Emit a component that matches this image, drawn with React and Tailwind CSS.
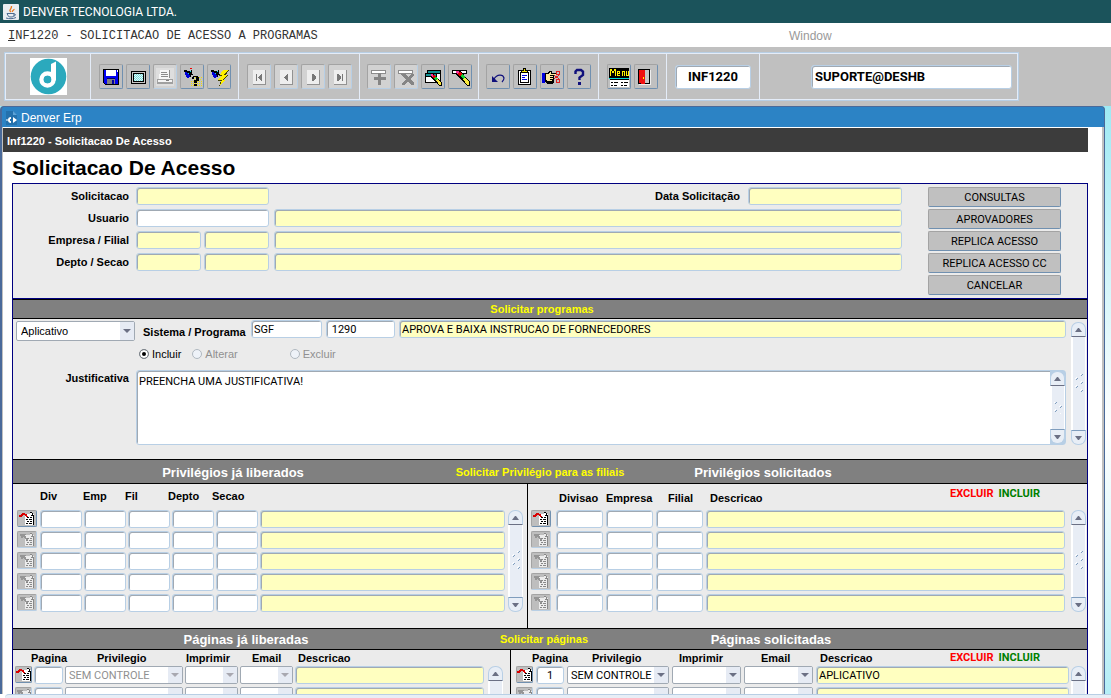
import React, { useState } from "react";
import clsx from "clsx";

const FIELD =
  "min-w-0 rounded-[3px] border border-[#b8cfe5] px-[2px] font-[Roboto,sans-serif] text-[11px] leading-4 text-black outline-none shadow-[inset_1px_1px_0_#a0a9b3]";

/* ---------- toolbar icons, one unit is one pixel ---------- */

const Svg = ({ children, w = 20, h = 20 }) => (
  <svg width={w} height={h} viewBox={`0 0 ${w} ${h}`} shapeRendering="crispEdges" fill="none" aria-hidden="true">
    {children}
  </svg>
);

const SaveIcon = () => (
  <Svg>
    <path d="M2 2h16v16H4l-2-2z" fill="#000" />
    <path d="M3 3h14v14H4l-1-1z" fill="#0000f0" />
    <path d="M5 3h10v6H5z" fill="#fff" />
    <path d="M16 3h1v2h-1z" fill="#fff" />
    <path d="M6 12h8v5H6z" fill="#808080" />
    <path d="M11 13h2v4h-2z" fill="#0000a0" />
    <path d="M6 11h8v1H6z" fill="#000060" />
  </Svg>
);

const ScreenIcon = () => (
  <Svg>
    <rect x="3" y="4" width="15" height="13" rx="1" fill="#000" />
    <path d="M4 5h13v11H4z" fill="#c8c8c8" />
    <path d="M5 6h11v9H5z" fill="#000" />
    <path d="M6 7h9v7H6z" fill="#e4fafa" />
    <path d="M6 7.500h9M6 9.500h9M6 11.500h9M6 13.500h9" stroke="#70d8d8" strokeDasharray="1 1" />
    <path d="M7 8.500h8M7 10.500h8M7 12.500h8" stroke="#80e0e0" strokeDasharray="1 1" />
  </Svg>
);

const PrintIcon = () => (
  <Svg>
    <path d="M1 1h18v18H1z" fill="#dedede" />
    <path d="M5 3h9l1 9H4z" fill="#f8f8f8" />
    <path d="M6 5.500h6M6 7.500h7M6 9.500h7M14.500 3v8M4 12.500h13" stroke="#8c8c8c" />
    <path d="M2 12h16v5H2z" fill="#a0a0a0" />
    <path d="M3 13h14v2H3z" fill="#f4f4f4" />
    <path d="M11 13.500h3" stroke="#808080" />
  </Svg>
);

const Torch = () => (
  <>
    <path d="M2 4h4l3 3-2 4H5z" fill="#0000d8" />
    <path d="M5 4h3l2 2-2 3-3-3z" fill="#00d8e8" />
    <path d="M2 3h3v1h3v1h2v2h1v1H9v2H8V8H7V6H5V5H2zM9 3h1v2H9z" fill="#000" />
  </>
);

const QueryIcon = () => (
  <Svg>
    <path d="M11 10.500h9M12 12.500h8M9 14.500h11M9 16.500h11M9 18.500h11" stroke="#f0e000" strokeDasharray="1 1" />
    <Torch />
    <path d="M8 1h2v1H8z" fill="#f00000" />
    <path d="M11 9h5v1h1v4h-2v2h-3v-3h2v-3h-2v2h-2v-2h1zM12 17h3v2h-3z" fill="#000" />
  </Svg>
);

const RunQueryIcon = () => (
  <Svg>
    <Torch />
    <path d="M14 3h6l-3 5h2l-4 5h2l-7 6 2-5H9l3-5h-2z" fill="#404000" />
    <path d="M14 3h5l-4 5h3l-4 5h2l-5 5 2-5H9l4-5h-2z" fill="#fff000" />
  </Svg>
);

const NavIcon = ({ children }) => (
  <Svg>
    <path d="M4 3h13v14H4z" fill="#eee" />
    <path d="M16 3h1v15H4v-1h12z" fill="#929292" />
    <g fill="#777">{children}</g>
  </Svg>
);

const FirstIcon = () => <NavIcon><path d="M7 7h1v7H7zM12 7h1v7h-1l-3-3v-1z" /></NavIcon>;
const PrevIcon = () => <NavIcon><path d="M11 7h1v7h-1l-3-3v-1z" /></NavIcon>;
const NextIcon = () => <NavIcon><path d="M9 7h1l3 3v1l-3 3H9z" /></NavIcon>;
const LastIcon = () => <NavIcon><path d="M7 7h1l3 3v1l-3 3H7zM12 7h1v7h-1z" /></NavIcon>;

const InsertIcon = () => (
  <Svg>
    <path d="M2 3h15v4H2z" fill="#8c8c8c" />
    <path d="M3 4h13v2H3z" fill="#fff" />
    <path d="M9 6h3v4h5v3h-5v5H9v-5H5v-3h4z" fill="#858585" />
  </Svg>
);

const RemoveIcon = () => (
  <Svg>
    <path d="M2 3h15v4H2z" fill="#8c8c8c" />
    <path d="M3 4h13v2H3z" fill="#fff" />
    <path d="M5 7h4l3 3 3-3h3v1l-4 4 4 4v2h-3l-3-4-3 4H6v-2l4-4-5-4z" fill="#858585" />
  </Svg>
);

const Pencil = () => (
  <>
    <path d="M6 3h3l4 4 1 1 6 7v4h-3L6 8z" fill="#000" />
    <path d="M6 4h3l2 3-2 2-3-3z" fill="#ff30a0" />
    <path d="M9 5h1l2 2-2 2-2-1z" fill="#e00000" />
    <path d="M12 7l3 3-2 2-3-3z" fill="#10d030" />
    <path d="M15 10l4 5v3h-2l-4-6z" fill="#f8e840" />
  </>
);

const ClearBlockIcon = () => (
  <Svg>
    <path d="M4 3h14v13H4zM2 6h3v10H2z" fill="#000" />
    <path d="M5 4h12v2H5zM3 7h10v2H3z" fill="#109090" />
    <path d="M3 10h10v5H3zM14 7h3v8h-3z" fill="#fff" />
    <g transform="translate(3 4) scale(.8)"><Pencil /></g>
  </Svg>
);

const ClearRecordIcon = () => (
  <Svg>
    <path d="M2 3h15v4H2z" fill="#000" />
    <path d="M3 4h13v2H3z" fill="#fff" />
    <Pencil />
  </Svg>
);

const UndoIcon = () => (
  <svg width="20" height="20" viewBox="0 0 20 20" fill="none" aria-hidden="true">
    <path d="M4 9v6h6z" fill="#10107c" />
    <path d="M6 12c3-5 9-5 10-1 0 2-1 3-2 4" stroke="#10107c" strokeWidth="1.200" />
  </svg>
);

const ClipboardIcon = () => (
  <Svg>
    <path d="M3 3h13v15H3z" fill="#000" />
    <path d="M4 4h11v13H4z" fill="#fff" />
    <path d="M5 5h9v11H5z" fill="#000" />
    <path d="M6 6h7v9H6z" fill="#fff" />
    <path d="M8 1h3v2h2v3H6V3h2z" fill="#000" />
    <path d="M9 2h1v2h2v1H7V4h2z" fill="#f0e000" />
    <path d="M7 8.500h5M7 10.500h3M7 12.500h5" stroke="#0000e0" />
  </Svg>
);

const HandIcon = () => (
  <Svg>
    <path d="M0 6h3v10H0z" fill="#0000e0" />
    <path d="M3 6h2l3-2h2v2h5v2h-3v7l-2 2H5l-2-2z" fill="#000" />
    <path d="M4 7h2l2-2h1v2h5v1H8v1h3v1H8v1h3v1H8v1h2v1H5l-1-1z" fill="#ffe8a0" />
    <path d="M14.500 4.500h3v3h-3zM14.500 12.500h3v3h-3zM12 12l5-4M12 8l5 4" stroke="#e02020" />
  </Svg>
);

const HelpIcon = () => (
  <svg width="20" height="20" viewBox="0 0 20 20" fill="none" aria-hidden="true">
    <path d="M6.500 7V4.500L8 3h4l2 1.500V8l-3.500 2.500V13" stroke="#10107c" strokeWidth="2.400" />
    <path d="M9 15h3v3H9z" fill="#10107c" />
  </svg>
);

const MenuIcon = () => (
  <Svg>
    <path d="M0 1h20v10H0z" fill="#000" />
    <path d="M1.500 9V2.500h1L4 6l1.500-3.500h1V9M11 8.500H8.500v-4h2v2h-2M13.500 9V4.500h2V9M17.500 4v4.500h2V4" stroke="#fff000" />
    <path d="M1 11h19v9H1z" fill="#fff" />
    <path d="M0 11h20v1H0z" fill="#00d8d8" />
    <path d="M1 12.500h19M2 15.500h2m1 0h4m3 0h2m1 0h4M2 18.500h2m1 0h3m4 0h2m1 0h3" stroke="#000" />
  </Svg>
);

const ExitIcon = () => (
  <Svg>
    <path d="M2 2h12v15H2z" fill="#000" />
    <path d="M9 3h4v13H9z" fill="#c8c8c8" />
    <path d="M3 3h5l1 1v13H7l-4-1z" fill="#f01010" />
    <path d="M7 10h1v2H7z" fill="#ff0" />
    <path d="M14 3h1v15H3v-1h11z" fill="#eee" />
  </Svg>
);

const toolbarGroups = [
  {
    width: "w-[148px]",
    tools: [
      { label: "Salvar", icon: SaveIcon },
      { label: "Tela", icon: ScreenIcon },
      { label: "Imprimir", icon: PrintIcon, disabled: true },
      { label: "Consultar", icon: QueryIcon },
      { label: "Executar consulta", icon: RunQueryIcon },
    ],
  },
  {
    width: "w-[121px]",
    tools: [
      { label: "Primeiro", icon: FirstIcon, disabled: true },
      { label: "Anterior", icon: PrevIcon, disabled: true },
      { label: "Proximo", icon: NextIcon, disabled: true },
      { label: "Ultimo", icon: LastIcon, disabled: true },
    ],
  },
  {
    width: "w-[119px]",
    tools: [
      { label: "Inserir", icon: InsertIcon, disabled: true },
      { label: "Remover", icon: RemoveIcon, disabled: true },
      { label: "Limpar bloco", icon: ClearBlockIcon },
      { label: "Limpar registro", icon: ClearRecordIcon },
    ],
  },
  {
    width: "w-[120px]",
    tools: [
      { label: "Desfazer", icon: UndoIcon },
      { label: "Lista de valores", icon: ClipboardIcon },
      { label: "Chamar", icon: HandIcon },
      { label: "Ajuda", icon: HelpIcon },
    ],
  },
  {
    width: "w-[68px]",
    tools: [
      { label: "Menu", icon: MenuIcon },
      { label: "Sair", icon: ExitIcon },
    ],
  },
];

const JavaIcon = () => (
  <svg width="16" height="16" viewBox="0 0 16 16" aria-hidden="true">
    <rect width="16" height="16" rx="1" fill="#e8ecf0" />
    <path d="M8 8C5 6 9 5 8.500 2M9.500 8c-1-1.500 2-2 1.500-3" stroke="#e87a20" strokeWidth="1.300" fill="none" />
    <path d="M4 9.500h7v2c0 2-6 2-6 0zM11 10c2-.5 2 2-.5 2M3 14c3 1 7 1 10-.5" stroke="#4a6a90" strokeWidth="1" fill="none" />
  </svg>
);

const DenverLogo = () => (
  <svg width="37" height="37" viewBox="0 0 37 37" className="shrink-0" role="img" aria-label="Denver">
    <rect width="37" height="37" fill="#fff" />
    <circle cx="18.500" cy="18.500" r="17.800" fill="#2ba9bd" />
    <circle cx="17.500" cy="21.500" r="6" fill="none" stroke="#fff" strokeWidth="4.500" />
    <path d="M21 6l5-2.500V22l-3 3-2-3z" fill="#fff" />
    <circle cx="17.500" cy="21.500" r="3.800" fill="#2ba9bd" />
  </svg>
);

const FormIcon = () => (
  <svg width="13" height="16" viewBox="0 0 13 16" aria-hidden="true">
    <path d="M1 1h7l4 4v10H1z" fill="#2471ad" />
    <path d="M8 1v4h4z" fill="#5da3d8" />
    <path d="M6 7a3 3 0 1 0 0 6v-2H5V9h1zM8 7l4 3-4 3z" fill="#fff" />
    <path d="M1 10h2" stroke="#fff" />
  </svg>
);

// small "detail" button in front of each record
const DetailIcon = ({ active }) => {
  const ink = active ? "#000" : "#888";
  return (
    <svg width="18" height="15" viewBox="0 0 18 15" shapeRendering="crispEdges" fill="none" className="shrink-0" aria-hidden="true">
      <path d="M7 3h5V1h2l2 3v10H7z" fill={active ? "#fff" : "#ececec"} />
      <path d="M12 1.500h2M14.500 2v2M15.500 4v10M13 4.500h2M9 6.500h2m1 0h2M8 8.500h2m1 0h3M9 10.500h2m1 0h2M8 12.500h2m1 0h3" stroke={ink} />
      {active ? (
        <path d="M1 4h2V3h1V2h3v1h2v2h1v1H8V5H7V4H5v1H4v1H1z" fill="#d80000" />
      ) : (
        <path d="M2 2h6v1H7v1h1v2h1v1h1v1H8V7H7V6H6V5H5v1H3V4H2z" fill="#959595" />
      )}
    </svg>
  );
};

/* ---------- building blocks ---------- */

const ToolButton = ({ tool }) => {
  const Icon = tool.icon;
  return (
    <button
      type="button"
      aria-label={tool.label}
      disabled={tool.disabled}
      className={clsx(
        "flex h-[25px] w-6 shrink-0 items-center justify-center rounded-[2px] border border-t-[#a3a3a3] border-l-[#a3a3a3]",
        tool.disabled ? "border-r-[#b8cfe5] border-b-[#b8cfe5] bg-[#d2d2d2]" : "border-r-[#7090b0] border-b-[#7090b0] bg-[#c0c0c0]"
      )}
    >
      <Icon />
    </button>
  );
};

const Field = ({ label, id, className, yellow, value = "" }) => (
  <input
    id={id}
    aria-label={label}
    defaultValue={value}
    readOnly={yellow}
    className={clsx(FIELD, "h-[18px]", yellow ? "bg-[#ffffc0]" : "bg-white", className)}
  />
);

const Combo = ({ label, options, className, disabled, tall }) => (
  <div className={clsx("relative shrink-0", tall ? "h-5" : "h-[18px]", className)}>
    <select
      aria-label={label}
      disabled={disabled}
      className={clsx(
        "block h-full w-full appearance-none rounded-[2px] border border-[#a0a9b3] bg-white text-[11px] leading-4 opacity-100 outline-none",
        tall ? "pl-1" : "pt-px pl-[3px] font-[Roboto,sans-serif]",
        disabled ? "text-[#909090]" : "text-black"
      )}
    >
      {options.map((o) => (
        <option key={o}>{o}</option>
      ))}
    </select>
    <span className="pointer-events-none absolute inset-y-px right-px flex w-[14px] items-center justify-center bg-[#e6ebf4]">
      <svg width="8" height="4" viewBox="0 0 8 4" aria-hidden="true">
        <path d="M0 0h8L4 4z" fill={disabled ? "#a8a8b0" : "#6b7084"} />
      </svg>
    </span>
  </div>
);

const ScrollBar = ({ className, short }) => (
  <div className={clsx("flex w-[15px] shrink-0 flex-col", className)}>
    <button
      type="button"
      aria-label="Rolar para cima"
      className="flex h-[15px] shrink-0 items-center justify-center rounded-t-[7px] border border-b-[#6b7084] border-[#b8cfe5] bg-[#e8eef6]"
    >
      <svg width="7" height="4" viewBox="0 0 7 4"><path d="M3 0h1l3 4H0z" fill="#6b7084" /></svg>
    </button>
    <div className="flex min-h-0 flex-1 items-center justify-center overflow-hidden border-r border-l-2 border-white bg-[#e8edf5]">
      <svg width="8" height={short ? 12 : 20} viewBox={short ? "0 4 8 12" : "0 0 8 20"} aria-hidden="true">
        <path d="M6 2l2-2M1 6l2-2M6 10l2-2M1 14l2-2M6 18l2-2" stroke="#7f9dbd" />
        <path d="M5 1l2-2M0 5l2-2M5 9l2-2M0 13l2-2M5 17l2-2" stroke="#fff" />
      </svg>
    </div>
    <button
      type="button"
      aria-label="Rolar para baixo"
      className="flex h-[15px] shrink-0 items-center justify-center rounded-b-[7px] border border-t-[#7f9dbd] border-[#b8cfe5] bg-[#e8eef6]"
    >
      <svg width="7" height="4" viewBox="0 0 7 4"><path d="M0 0h7L4 4H3z" fill="#6b7084" /></svg>
    </button>
  </div>
);

const DetailButton = ({ active, className }) => (
  <button
    type="button"
    aria-label="Detalhe"
    disabled={!active}
    className={clsx(
      "flex h-[17px] shrink-0 items-center justify-center overflow-hidden rounded-[2px] border border-t-[#a3a3a3] border-l-[#a3a3a3] bg-[#bebebe]",
      active ? "border-r-[#7090b0] border-b-[#7090b0]" : "border-r-[#b8cfe5] border-b-[#b8cfe5]",
      className
    )}
  >
    <DetailIcon active={active} />
  </button>
);

const Legend = () => (
  <span className="flex gap-[5px] pr-[47px] font-[Roboto,sans-serif]">
    <span className="text-[#ff0000]">EXCLUIR</span>
    <span className="text-[#008000]">INCLUIR</span>
  </span>
);

const SectionBar = ({ className, children }) => (
  <div className={clsx("grid items-center border-y border-black bg-[#808080] text-center font-bold whitespace-nowrap", className)}>
    {children}
  </div>
);

const actions = ["CONSULTAS", "APROVADORES", "REPLICA ACESSO", "REPLICA ACESSO CC", "CANCELAR"];
const rows = [0, 1, 2, 3, 4];

/* ---------- screen parts ---------- */

const Toolbar = () => (
  <div className="flex h-[59px] shrink-0 items-start bg-[#c0c0c0] pt-[6px] pl-[5px]">
    <div className="flex h-[47px] border border-[#e4ecf8] shadow-[0_0_0_1px_#b8cfe5]">
      <div className="flex w-[85px] shrink-0 items-center justify-center border-r border-[#e4ecf8]">
        <DenverLogo />
      </div>
      {toolbarGroups.map((group, i) => (
        <div
          key={i}
          className={clsx("flex shrink-0 items-center justify-center gap-[3px] border-r border-[#e4ecf8]", group.width)}
        >
          {group.tools.map((tool) => (
            <ToolButton key={tool.label} tool={tool} />
          ))}
        </div>
      ))}
      <div className="flex w-[93px] shrink-0 items-center justify-center border-r border-[#e4ecf8]">
        <input
          aria-label="Programa"
          defaultValue="INF1220"
          className="h-6 w-[76px] rounded-[3px] border border-[#b8cfe5] bg-white text-center font-[Roboto,sans-serif] text-[13px] font-bold shadow-[inset_1px_1px_0_#a0a9b3]"
        />
      </div>
      <div className="flex w-[257px] shrink-0 items-center justify-end pr-[5px]">
        <input
          aria-label="Usuario conectado"
          defaultValue="SUPORTE@DESHB"
          className="h-6 w-[201px] rounded-[3px] border border-[#b8cfe5] bg-white px-[3px] font-[Roboto,sans-serif] text-[13px] font-bold shadow-[inset_1px_1px_0_#a0a9b3]"
        />
      </div>
    </div>
  </div>
);

const HeaderForm = () => (
  <div className="flex gap-[26px] border-b border-[#000080] pt-[3px] pr-[26px] pb-[3px]">
    <div className="flex min-w-0 flex-1 flex-col gap-1">
      <div className="flex h-[18px] items-center">
        <label htmlFor="solicitacao" className="mr-[7px] w-[116px] text-right font-bold">Solicitacao</label>
        <Field id="solicitacao" yellow className="w-[133px]" />
        <label htmlFor="data" className="mr-2 ml-auto font-bold">Data Solicitação</label>
        <Field id="data" yellow className="w-[154px]" />
      </div>
      <div className="flex h-[18px] items-center">
        <label htmlFor="usuario" className="mr-[7px] w-[116px] text-right font-bold">Usuario</label>
        <Field id="usuario" className="mr-[5px] w-[133px]" />
        <Field label="Nome do usuario" yellow className="flex-1" />
      </div>
      <div className="flex h-[18px] items-center">
        <label htmlFor="empresa" className="mr-[7px] w-[116px] text-right font-bold">Empresa / Filial</label>
        <Field id="empresa" yellow className="mr-[3px] w-[65px]" />
        <Field label="Filial" yellow className="mr-[5px] w-[65px]" />
        <Field label="Nome da empresa" yellow className="flex-1" />
      </div>
      <div className="flex h-[18px] items-center">
        <label htmlFor="depto" className="mr-[7px] w-[116px] text-right font-bold">Depto / Secao</label>
        <Field id="depto" yellow className="mr-[3px] w-[65px]" />
        <Field label="Secao" yellow className="mr-[5px] w-[65px]" />
        <Field label="Nome do departamento" yellow className="flex-1" />
      </div>
    </div>
    <div className="flex w-[133px] shrink-0 flex-col gap-[2px]">
      {actions.map((text) => (
        <button
          key={text}
          type="button"
          className="h-5 rounded-[2px] border border-t-[#a3a3a3] border-r-[#7090b0] border-b-[#7090b0] border-l-[#a3a3a3] bg-[#c0c0c0] pt-px font-[Roboto,sans-serif] text-[11px] leading-4"
        >
          {text}
        </button>
      ))}
    </div>
  </div>
);

const RadioOption = ({ value, current, onPick, className }) => {
  const disabled = value !== "Incluir";
  return (
    <label className={clsx("flex items-center gap-[3px]", disabled ? "text-[#909090]" : "text-black", className)}>
      <input
        type="radio"
        name="acao"
        value={value}
        checked={current === value}
        disabled={disabled}
        onChange={() => onPick(value)}
        className="size-[10px] appearance-none rounded-full border border-[#b0b8c0] bg-[#eef2f8] checked:border-[#808890] checked:bg-black checked:shadow-[inset_0_0_0_2px_#fff]"
      />
      {value}
    </label>
  );
};

const ProgramForm = () => {
  const [acao, setAcao] = useState("Incluir");

  return (
    <div className="flex gap-[5px] pr-px pb-[14px]">
      <div className="min-w-0 flex-1 pt-px">
        <div className="flex h-[22px] items-start pl-[3px]">
          <Combo label="Tipo" options={["Aplicativo", "Pagina"]} tall className="mt-px w-[119px]" />
          <label htmlFor="sistema" className="ml-2 w-[108px] shrink-0 self-end pb-[2px] font-bold whitespace-nowrap">
            Sistema / Programa
          </label>
          <Field id="sistema" value="SGF" className="mr-1 w-[71px]" />
          <Field label="Programa" value=" 1290" className="mr-1 w-[69px]" />
          <Field label="Descricao do programa" yellow value="APROVA E BAIXA INSTRUCAO DE FORNECEDORES" className="flex-1" />
        </div>
        <div className="mt-[3px] flex h-[18px] items-center pl-[126px]">
          <RadioOption value="Incluir" current={acao} onPick={setAcao} />
          <RadioOption value="Alterar" current={acao} onPick={setAcao} className="ml-[11px]" />
          <RadioOption value="Excluir" current={acao} onPick={setAcao} className="ml-[52px]" />
        </div>
        <div className="mt-[7px] flex items-start">
          <label htmlFor="justificativa" className="mr-[7px] w-[116px] text-right font-bold">Justificativa</label>
          <div className="flex h-[75px] flex-1 rounded-[3px] border border-[#b8cfe5] bg-white shadow-[inset_1px_1px_0_#a0a9b3]">
            <textarea
              id="justificativa"
              defaultValue="PREENCHA UMA JUSTIFICATIVA!"
              className="h-full min-w-0 flex-1 resize-none overflow-hidden bg-transparent px-[2px] pt-[3px] font-[Roboto,sans-serif] text-[11px] leading-4 outline-none"
            />
            <ScrollBar short className="bg-[#b8cfe5]" />
          </div>
        </div>
      </div>
      <ScrollBar className="mt-[3px]" />
    </div>
  );
};

const PrivilegeBlocks = () => (
  <div className="grid grid-cols-[514fr_560fr]">
    <div className="min-w-0 pb-4">
      <div className="grid h-[26px] grid-cols-[43px_42px_43px_44px_auto] pt-1 pl-[27px] font-bold">
        <span>Div</span>
        <span>Emp</span>
        <span>Fil</span>
        <span>Depto</span>
        <span>Secao</span>
      </div>
      <div className="flex gap-[3px] pr-1 pl-1">
        <div className="flex min-w-0 flex-1 flex-col gap-[3px]">
          {rows.map((r) => (
            <div key={r} className="flex gap-[2px]">
              <DetailButton active={r === 0} className="mr-px w-5" />
              {["Div", "Emp", "Fil", "Depto", "Secao"].map((name) => (
                <Field key={name} label={`${name} ${r + 1}`} className="w-[42px]" />
              ))}
              <Field label={`Descricao ${r + 1}`} yellow className="flex-1" />
            </div>
          ))}
        </div>
        <ScrollBar />
      </div>
    </div>
    <div className="min-w-0 border-l border-black pb-4">
      <div className="grid h-[26px] grid-cols-[47px_62px_42px_1fr_auto] pt-[2px] pl-[31px] font-bold">
        <span className="pt-1">Divisao</span>
        <span className="pt-1">Empresa</span>
        <span className="pt-1">Filial</span>
        <span className="pt-1">Descricao</span>
        <Legend />
      </div>
      <div className="flex gap-[6px] pr-px pl-[3px]">
        <div className="flex min-w-0 flex-1 flex-col gap-[3px]">
          {rows.map((r) => (
            <div key={r} className="flex gap-[3px]">
              <DetailButton active={r === 0} className="mr-[2px] w-5" />
              {["Divisao", "Empresa", "Filial"].map((name) => (
                <Field key={name} label={`${name} ${r + 1}`} className="w-[47px]" />
              ))}
              <Field label={`Descricao solicitada ${r + 1}`} yellow className="flex-1" />
            </div>
          ))}
        </div>
        <ScrollBar />
      </div>
    </div>
  </div>
);

const PageBlocks = () => (
  <div className="grid grid-cols-[497fr_577fr]">
    <div className="min-w-0">
      <div className="grid h-4 grid-cols-[66px_89px_66px_46px_auto] pl-[18px] font-bold">
        <span>Pagina</span>
        <span>Privilegio</span>
        <span>Imprimir</span>
        <span>Email</span>
        <span>Descricao</span>
      </div>
      <div className="flex gap-1 pr-[7px] pl-[2px]">
        <div className="flex min-w-0 flex-1 flex-col gap-[3px]">
          {rows.map((r) => (
            <div key={r} className="flex gap-[2px]">
              <DetailButton active={r === 0} className="w-[17px]" />
              <Field label={`Pagina liberada ${r + 1}`} className="w-[29px]" />
              <Combo label={`Privilegio liberado ${r + 1}`} options={[r === 0 ? "SEM CONTROLE" : ""]} disabled className="w-[118px]" />
              <Combo label={`Imprimir liberado ${r + 1}`} options={[""]} disabled className="w-[53px]" />
              <Combo label={`Email liberado ${r + 1}`} options={[""]} disabled className="w-[53px]" />
              <Field label={`Descricao liberada ${r + 1}`} yellow className="flex-1" />
            </div>
          ))}
        </div>
        <ScrollBar />
      </div>
    </div>
    <div className="min-w-0 border-l border-black">
      <div className="grid h-4 grid-cols-[60px_87px_82px_59px_1fr_auto] pl-[21px] font-bold">
        <span>Pagina</span>
        <span>Privilegio</span>
        <span>Imprimir</span>
        <span>Email</span>
        <span>Descricao</span>
        <Legend />
      </div>
      <div className="flex gap-[2px] pr-px pl-[5px]">
        <div className="flex min-w-0 flex-1 flex-col gap-[3px]">
          {rows.map((r) => (
            <div key={r} className="flex gap-[3px]">
              <DetailButton active={r === 0} className="w-[17px]" />
              <Field label={`Pagina ${r + 1}`} value={r === 0 ? "1" : ""} className="w-7 text-center" />
              <Combo label={`Privilegio ${r + 1}`} options={[r === 0 ? "SEM CONTROLE" : ""]} className="w-[102px]" />
              <Combo label={`Imprimir ${r + 1}`} options={[""]} className="w-[69px]" />
              <Combo label={`Email ${r + 1}`} options={[""]} className="w-[69px]" />
              <Field label={`Descricao da pagina ${r + 1}`} yellow value={r === 0 ? "APLICATIVO" : ""} className="flex-1" />
            </div>
          ))}
        </div>
        <ScrollBar />
      </div>
    </div>
  </div>
);

const App = () => {
  return (
    <div className="flex h-screen flex-col overflow-hidden bg-white font-['Liberation_Sans',Arial,sans-serif] text-[11px] leading-4 text-black">
      <div className="flex h-[23px] shrink-0 items-center gap-1 bg-[#1b535b] pl-[3px] font-[Roboto,sans-serif] text-[12px] text-white">
        <JavaIcon />
        DENVER TECNOLOGIA LTDA.
      </div>
      <div className="grid h-6 shrink-0 grid-cols-[789fr_322fr] items-center pt-px text-[12px]">
        <span className="pl-2 font-['Liberation_Mono',monospace] whitespace-nowrap text-[#333]">
          <span className="underline">I</span>NF1220 - SOLICITACAO DE ACESSO A PROGRAMAS
        </span>
        <span className="text-[#999]">Window</span>
      </div>

      <Toolbar />

      <div className="flex min-h-0 flex-1 overflow-hidden bg-linear-to-b from-[#9eeaf4] via-white via-55% to-[#b4eef6] pr-[6px]">
        <div className="min-w-0 flex-1 rounded-t-[4px] border-t border-r border-l-2 border-[#4a6a9a] bg-[#2c83c5]">
          <div className="flex h-5 items-center gap-[3px] pt-px pl-[3px] text-[12px] text-white">
            <FormIcon />
            Denver Erp
          </div>
          <div className="border-r-2 border-l border-[#c0c0c0] bg-white pt-px pr-[14px]">
            <div className="flex h-6 items-center bg-[#3c3c3c] pt-[2px] pl-1 font-bold text-white">
              Inf1220 - Solicitacao De Acesso
            </div>
            <h1 className="flex h-[31px] items-center pl-[9px] text-[21px] leading-6 font-bold">Solicitacao De Acesso</h1>
            <div className="ml-[9px] border border-[#000080] bg-[#ebebeb]">
              <HeaderForm />
              <SectionBar className="h-5 pr-4 text-[#ffff00]">Solicitar programas</SectionBar>
              <ProgramForm />
              <SectionBar className="h-[25px] grid-cols-[440fr_174fr_272fr_188fr]">
                <span className="pt-[2px] text-[13px] text-white">Privilégios já liberados</span>
                <span className="text-[#ffff00]">Solicitar Privilégio para as filiais</span>
                <span className="pt-[2px] text-[13px] text-white">Privilégios solicitados</span>
              </SectionBar>
              <PrivilegeBlocks />
              <SectionBar className="h-[22px] grid-cols-[466fr_130fr_324fr_154fr]">
                <span className="pt-[2px] text-[13px] text-white">Páginas já liberadas</span>
                <span className="text-[#ffff00]">Solicitar páginas</span>
                <span className="pt-[2px] text-[13px] text-white">Páginas solicitadas</span>
              </SectionBar>
              <PageBlocks />
            </div>
          </div>
        </div>
      </div>

      <div className="ml-[5px] h-1 shrink-0 rounded-tl-[4px] border-t border-[#b8cfe5] bg-[#e8eef6]" />
    </div>
  );
};

export default App;
